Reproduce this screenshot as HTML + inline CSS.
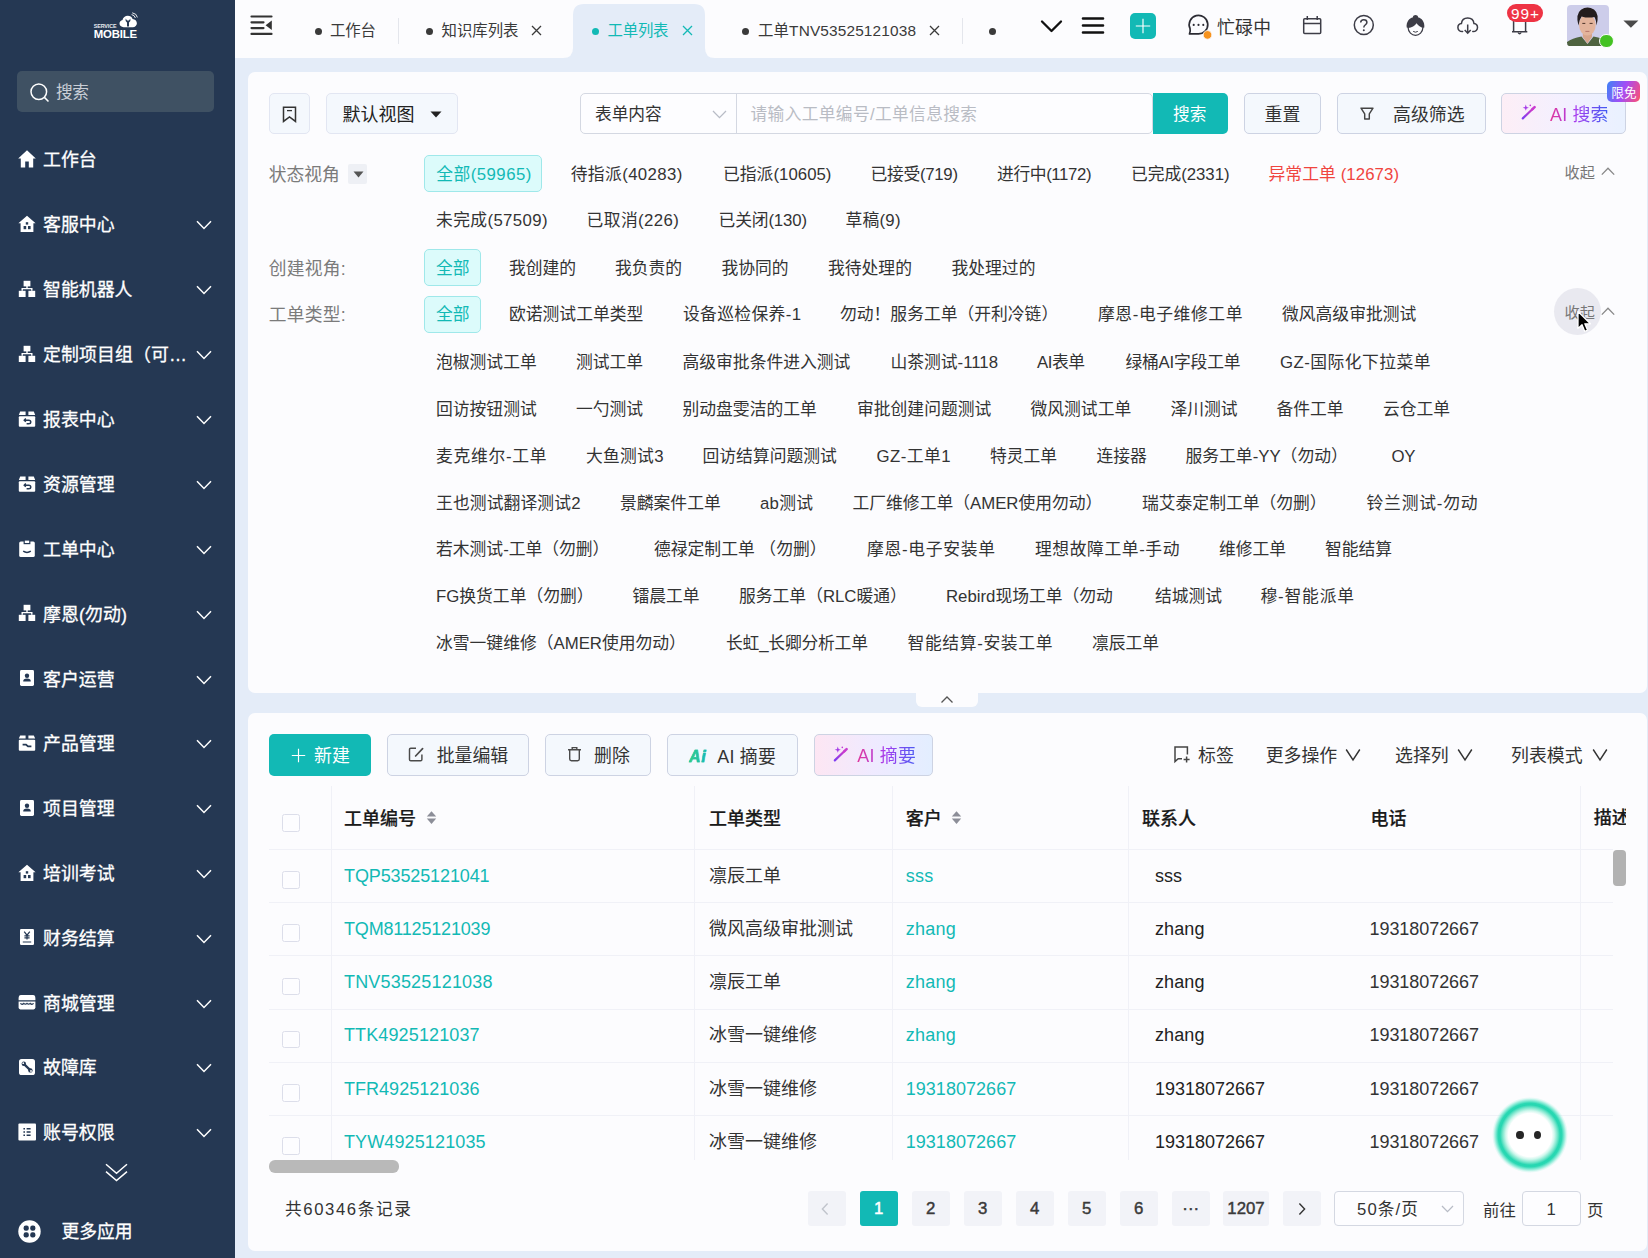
<!DOCTYPE html>
<html lang="zh-CN"><head><meta charset="utf-8"><title>工单列表</title>
<style>
html,body{margin:0;padding:0}
body{width:1648px;height:1258px;overflow:hidden;position:relative;background:#e4ecf8;font-family:"Liberation Sans","Noto Sans CJK SC",sans-serif}
.t{position:absolute;white-space:nowrap;line-height:24px;height:24px}
.b{position:absolute;box-sizing:border-box}
</style></head>
<body>
<div class="b" style="left:235.0px;top:0.0px;width:1413.0px;height:58.0px;background:#fcfcfe"></div>
<svg class="b" style="left:563px;top:3px" width="152" height="55" viewBox="0 0 152 55"><path d="M0 55 Q10 55 10 45 L10 12 Q10 1 21 1 L131 1 Q142 1 142 12 L142 45 Q142 55 152 55 Z" fill="#e4ecf8"/></svg>
<svg class="b" style="left:250.0px;top:14.0px;" width="23" height="22" viewBox="0 0 23 22"><g stroke="#333" stroke-width="2.2" stroke-linecap="round"><path d="M1.5 2.5H21.5M1.5 8.3H13.5M1.5 14.1H13.5M1.5 19.9H21.5"/></g><path d="M21.8 6.5V16L15.6 11.2Z" fill="#333"/></svg>
<div class="b" style="left:314.5px;top:27.5px;width:7.0px;height:7.0px;border-radius:50%;background:#3a3a3a"></div>
<span class="t " style="left:330.0px;top:19.2px;font-size:15.4px;color:#3a3a3a;font-weight:400;letter-spacing:-0.09px;">工作台</span>
<div class="b" style="left:397.5px;top:18.0px;width:1.0px;height:26.0px;background:#e4e6ec"></div>
<div class="b" style="left:425.5px;top:27.5px;width:7.0px;height:7.0px;border-radius:50%;background:#3a3a3a"></div>
<span class="t " style="left:441.5px;top:19.2px;font-size:15.4px;color:#3a3a3a;font-weight:400;letter-spacing:0.01px;">知识库列表</span>
<svg class="b" style="left:531.0px;top:25.0px;" width="11" height="11" viewBox="0 0 11 11"><path d="M1 1L10 10M10 1L1 10" stroke="#3a3a3a" stroke-width="1.3" fill="none"/></svg>
<div class="b" style="left:591.5px;top:27.5px;width:7.0px;height:7.0px;border-radius:50%;background:#12b9b5"></div>
<span class="t " style="left:607.5px;top:19.2px;font-size:15.4px;color:#12b9b5;font-weight:400;letter-spacing:-0.19px;">工单列表</span>
<svg class="b" style="left:681.5px;top:25.0px;" width="11" height="11" viewBox="0 0 11 11"><path d="M1 1L10 10M10 1L1 10" stroke="#12b9b5" stroke-width="1.3" fill="none"/></svg>
<div class="b" style="left:742.0px;top:27.5px;width:7.0px;height:7.0px;border-radius:50%;background:#3a3a3a"></div>
<span class="t " style="left:758.0px;top:19.2px;font-size:15.4px;color:#3a3a3a;font-weight:400;letter-spacing:0.15px;">工单TNV53525121038</span>
<svg class="b" style="left:928.5px;top:25.0px;" width="11" height="11" viewBox="0 0 11 11"><path d="M1 1L10 10M10 1L1 10" stroke="#3a3a3a" stroke-width="1.3" fill="none"/></svg>
<div class="b" style="left:961.5px;top:18.0px;width:1.0px;height:26.0px;background:#e4e6ec"></div>
<div class="b" style="left:988.5px;top:27.5px;width:7.0px;height:7.0px;border-radius:50%;background:#3a3a3a"></div>
<svg class="b" style="left:1040.0px;top:19.0px;" width="23" height="15" viewBox="0 0 23 15"><path d="M2 2.5L11.5 12L21 2.5" stroke="#111" stroke-width="2.3" fill="none" stroke-linecap="round" stroke-linejoin="round"/></svg>
<svg class="b" style="left:1081.0px;top:16.0px;" width="24" height="19" viewBox="0 0 24 19"><path d="M2 2.5H22M2 9.5H22M2 16.5H22" stroke="#111" stroke-width="2.6" stroke-linecap="round"/></svg>
<div class="b" style="left:1130.0px;top:13.0px;width:26.0px;height:26.0px;background:#12b9b5;border-radius:5px"></div>
<svg class="b" style="left:1130.0px;top:13.0px;" width="26" height="26" viewBox="0 0 26 26"><path d="M13 5.8V20.2M5.8 13H20.2" stroke="#fff" stroke-width="1.15"/></svg>
<svg class="b" style="left:1186.0px;top:12.0px;" width="26" height="28" viewBox="0 0 26 28"><path d="M4 16.4A9.3 9.3 0 1 1 11.5 21.85L3.5 21.9Q4.7 19.2 4 16.4Z" fill="none" stroke="#2b2b33" stroke-width="1.7" stroke-linejoin="round"/><circle cx="7.7" cy="12.9" r="1.05" fill="#2b2b33"/><circle cx="12.5" cy="12.9" r="1.05" fill="#2b2b33"/><circle cx="17.3" cy="12.9" r="1.05" fill="#2b2b33"/><circle cx="21.5" cy="22.9" r="4.3" fill="#f7931e" stroke="#fcfcff" stroke-width="0.8"/></svg>
<span class="t " style="left:1217.0px;top:16.2px;font-size:17.8px;color:#333;font-weight:400;letter-spacing:0.32px;">忙碌中</span>
<svg class="b" style="left:1301.0px;top:14.0px;" width="22" height="22" viewBox="0 0 22 22"><rect x="2.7" y="4.8" width="17" height="14.6" rx="1" fill="none" stroke="#3d3d47" stroke-width="1.5"/><path d="M2.7 9.4H19.7M6.3 2V6M16.2 2V6" stroke="#3d3d47" stroke-width="1.5" fill="none"/></svg>
<svg class="b" style="left:1352.0px;top:14.0px;" width="24" height="24" viewBox="0 0 24 24"><circle cx="11.8" cy="11" r="9.5" fill="none" stroke="#3d3d47" stroke-width="1.5"/><path d="M8.7 8.6C8.7 6.8 10 5.8 11.8 5.8C13.6 5.8 14.9 6.9 14.9 8.5C14.9 10.7 11.8 10.8 11.8 13.4" fill="none" stroke="#3d3d47" stroke-width="1.5"/><circle cx="11.8" cy="16.2" r="1" fill="#3d3d47"/></svg>
<svg class="b" style="left:1403.0px;top:13.0px;" width="24" height="26" viewBox="0 0 24 26"><path d="M3.7 14.6C3 8.4 6.6 5 9.7 4.4C10.1 2.8 11.2 2 12.5 2C13.8 2 14.9 2.8 15.3 4.4C18.4 5 22 8.4 21.3 14.6L19.8 14.9C17 13.9 15 12.5 13.6 10.2C12 12.7 8.6 14.5 5.2 14.9Z" fill="#3d3d47"/><path d="M5.1 14.6C5.3 19 8.6 22.3 12.5 22.3C16.4 22.3 19.7 19 19.9 14.6" fill="none" stroke="#3d3d47" stroke-width="1.2"/><path d="M10.2 18.4Q12.5 20 14.8 18.4" stroke="#3d3d47" stroke-width="1" fill="none"/></svg>
<svg class="b" style="left:1455.0px;top:14.0px;" width="24" height="22" viewBox="0 0 24 22"><path d="M7.6 17.6C4.6 17.8 2.9 15.8 2.9 13.6C2.9 11.4 4.4 9.8 6.4 9.6C6.8 6.2 9.4 4 12.7 4C16 4 18.6 6.2 19 9.6C21 9.8 22.5 11.4 22.5 13.6C22.5 15.8 20.8 17.8 17.8 17.6" fill="none" stroke="#3d3d47" stroke-width="1.5" stroke-linecap="round"/><path d="M12.7 10.4V19M9.7 16L12.7 19.2L15.7 16" fill="none" stroke="#3d3d47" stroke-width="1.5"/></svg>
<svg class="b" style="left:1508.0px;top:16.0px;" width="24" height="22" viewBox="0 0 24 22"><path d="M5.6 15.6V5M17.6 15.6V5M4 15.7H19.3" fill="none" stroke="#3d3d47" stroke-width="1.5"/><path d="M10 16.5Q11.6 19 13.2 16.5" stroke="#3d3d47" stroke-width="1.3" fill="none"/></svg>
<div class="b" style="left:1507.0px;top:3.5px;width:36.0px;height:18.2px;background:#ee3344;border-radius:9.1px"></div>
<span class="t " style="left:1511.0px;top:2.2px;font-size:15.4px;color:#fff;font-weight:400;letter-spacing:0.95px;">99+</span>
<svg class="b" style="left:1567.4px;top:4.8px" width="42" height="41.4" viewBox="0 0 42 41.4"><defs><clipPath id="av"><rect width="42" height="41.4" rx="4"/></clipPath></defs><g clip-path="url(#av)"><rect width="42" height="41.4" fill="#cdcdea"/><path d="M0 41.4V37Q5 33.5 14.5 31.5L20.5 39L26.5 31.5Q36 33.5 42 37V41.4Z" fill="#4f6340"/><path d="M15.8 26H25V32L20.4 38.6L15.8 32Z" fill="#d7a58c"/><ellipse cx="20.4" cy="20" rx="8.3" ry="10.6" fill="#e3b49c"/><path d="M11.4 20.5Q8.4 9 14 4.8Q20 0.6 27 4.4Q32.6 8.6 29.6 20.5Q29 14.5 27.4 12Q21 13.4 14.6 11.4Q12.2 14.5 11.4 20.5Z" fill="#241d1e"/><path d="M15.3 18.4H18.3M22.6 18.4H25.6" stroke="#4a3228" stroke-width="1"/><path d="M18.4 26.4H22.4" stroke="#b5746a" stroke-width="1"/></g></svg>
<div class="b" style="left:1599.3px;top:34.0px;width:14.4px;height:14.4px;background:#44c222;border-radius:50%;border:1px solid #fcfcff"></div>
<svg class="b" style="left:1623.3px;top:20.2px;" width="16" height="9" viewBox="0 0 16 9"><path d="M0.4 0.4H15.4L7.9 7.8Z" fill="#4a4a4a"/></svg>
<div class="b" style="left:0.0px;top:0.0px;width:235.0px;height:1258.0px;background:#253853"></div>
<span class="t " style="left:93.7px;top:13.5px;font-size:5.4px;color:#e8ebf0;font-weight:700;letter-spacing:-0.10px;">SERVICE</span>
<span class="t " style="left:93.7px;top:22.0px;font-size:11.4px;color:#fff;font-weight:700;letter-spacing:-0.20px;">MOBILE</span>
<svg class="b" style="left:118.0px;top:12.0px;" width="22" height="16" viewBox="0 0 22 16"><path d="M5.6 15.2C3.2 15.2 1.5 13.6 1.5 11.6C1.5 9.8 2.8 8.4 4.5 8.1C5 5.4 7.2 3.8 9.8 3.8C12 3.8 13.8 5 14.6 6.9C17 7.1 18.9 8.8 18.9 11.2C18.9 13.5 17.1 15.2 14.8 15.2Z" fill="#fff"/><path d="M7.6 6.6Q7 9.6 9 10.6V14.6H11V10.6Q13 9.6 12.4 6.6L10.9 8.6H9.1Z" fill="#253853"/><path d="M13.6 2.6Q16.6 3 17.4 6M14.2 0.8Q18.6 1.4 19.4 5.4" stroke="#fff" stroke-width="0.9" fill="none"/></svg>
<div class="b" style="left:17.0px;top:71.0px;width:197.0px;height:41.0px;background:#3f5163;border-radius:5px"></div>
<svg class="b" style="left:29.0px;top:82.0px;" width="22" height="22" viewBox="0 0 22 22"><circle cx="9.8" cy="9.8" r="7.8" fill="none" stroke="#fff" stroke-width="1.5"/><path d="M15.4 15.4L19.5 19.5" stroke="#fff" stroke-width="1.5"/></svg>
<span class="t " style="left:56.0px;top:81.2px;font-size:16.7px;color:#c9ced6;font-weight:400;letter-spacing:-0.38px;">搜索</span>
<svg class="b" style="left:18.0px;top:149.5px;" width="18" height="18" viewBox="0 0 18 18"><path d="M9 0.2L0.2 8.6H2.8V17.6H7.2V11.6H10.8V17.6H15.2V8.6H17.8Z" fill="#fff"/></svg>
<span class="t " style="left:43.0px;top:148.2px;font-size:17.9px;color:#fff;font-weight:400;-webkit-text-stroke:0.3px #fff;">工作台</span>
<svg class="b" style="left:18.0px;top:214.5px;" width="18" height="18" viewBox="0 0 18 18"><path d="M9 0.8L0.4 8.2H2.6V17H15.4V8.2H17.6Z" fill="#fff"/><rect x="5.6" y="11" width="2.6" height="3.2" fill="#253853"/><rect x="10" y="11" width="2.6" height="3.2" fill="#253853"/><rect x="7.8" y="7.2" width="2.4" height="2.4" fill="#253853"/></svg>
<span class="t " style="left:43.0px;top:213.2px;font-size:17.9px;color:#fff;font-weight:400;-webkit-text-stroke:0.3px #fff;">客服中心</span>
<svg class="b" style="left:196.0px;top:220.0px;" width="16" height="10" viewBox="0 0 16 10"><path d="M1 1.2L8 8.4L15 1.2" stroke="#fff" stroke-width="1.5" fill="none"/></svg>
<svg class="b" style="left:18.0px;top:279.5px;" width="18" height="18" viewBox="0 0 18 18"><rect x="5.6" y="0.8" width="6.8" height="5.6" fill="#fff"/><rect x="0.8" y="10.8" width="6.8" height="6.2" fill="#fff"/><rect x="10.4" y="10.8" width="6.8" height="6.2" fill="#fff"/><path d="M9 6V8.6M4.2 10.8V8.6H13.8V10.8" stroke="#fff" stroke-width="1.4" fill="none"/></svg>
<span class="t " style="left:43.0px;top:278.2px;font-size:17.9px;color:#fff;font-weight:400;-webkit-text-stroke:0.3px #fff;">智能机器人</span>
<svg class="b" style="left:196.0px;top:285.0px;" width="16" height="10" viewBox="0 0 16 10"><path d="M1 1.2L8 8.4L15 1.2" stroke="#fff" stroke-width="1.5" fill="none"/></svg>
<svg class="b" style="left:18.0px;top:344.5px;" width="18" height="18" viewBox="0 0 18 18"><rect x="5.6" y="0.8" width="6.8" height="5.6" fill="#fff"/><rect x="0.8" y="10.8" width="6.8" height="6.2" fill="#fff"/><rect x="10.4" y="10.8" width="6.8" height="6.2" fill="#fff"/><path d="M9 6V8.6M4.2 10.8V8.6H13.8V10.8" stroke="#fff" stroke-width="1.4" fill="none"/></svg>
<span class="t " style="left:43.0px;top:343.2px;font-size:17.9px;color:#fff;font-weight:400;letter-spacing:0.12px;-webkit-text-stroke:0.3px #fff;">定制项目组（可…</span>
<svg class="b" style="left:196.0px;top:350.0px;" width="16" height="10" viewBox="0 0 16 10"><path d="M1 1.2L8 8.4L15 1.2" stroke="#fff" stroke-width="1.5" fill="none"/></svg>
<svg class="b" style="left:18.0px;top:409.5px;" width="18" height="18" viewBox="0 0 18 18"><path d="M2.2 1.6H7.6V5H0.8ZM10.4 1.6H15.8L17.2 5H10.4Z" fill="#fff"/><rect x="0.8" y="6.2" width="16.4" height="10.6" rx="1" fill="#fff"/><path d="M6.4 10.2H10.8Q12.8 10.2 12.8 12Q12.8 13.8 10.8 13.8H8.6M7.8 8.6L6.2 10.2L7.8 11.8" stroke="#253853" stroke-width="1.4" fill="none"/></svg>
<span class="t " style="left:43.0px;top:408.2px;font-size:17.9px;color:#fff;font-weight:400;-webkit-text-stroke:0.3px #fff;">报表中心</span>
<svg class="b" style="left:196.0px;top:415.0px;" width="16" height="10" viewBox="0 0 16 10"><path d="M1 1.2L8 8.4L15 1.2" stroke="#fff" stroke-width="1.5" fill="none"/></svg>
<svg class="b" style="left:18.0px;top:474.5px;" width="18" height="18" viewBox="0 0 18 18"><path d="M2.2 1.6H7.6V5H0.8ZM10.4 1.6H15.8L17.2 5H10.4Z" fill="#fff"/><rect x="0.8" y="6.2" width="16.4" height="10.6" rx="1" fill="#fff"/><path d="M6.4 10.2H10.8Q12.8 10.2 12.8 12Q12.8 13.8 10.8 13.8H8.6M7.8 8.6L6.2 10.2L7.8 11.8" stroke="#253853" stroke-width="1.4" fill="none"/></svg>
<span class="t " style="left:43.0px;top:473.2px;font-size:17.9px;color:#fff;font-weight:400;-webkit-text-stroke:0.3px #fff;">资源管理</span>
<svg class="b" style="left:196.0px;top:480.0px;" width="16" height="10" viewBox="0 0 16 10"><path d="M1 1.2L8 8.4L15 1.2" stroke="#fff" stroke-width="1.5" fill="none"/></svg>
<svg class="b" style="left:18.0px;top:539.5px;" width="18" height="18" viewBox="0 0 18 18"><rect x="1.2" y="1.4" width="15.6" height="15.6" rx="1.6" fill="#fff"/><rect x="5.6" y="0.6" width="6.8" height="3.6" fill="#253853"/><rect x="6.8" y="0.6" width="4.4" height="2.4" fill="#fff"/><path d="M5.2 11.2Q9 13.6 12.8 11.2" stroke="#253853" stroke-width="1.5" fill="none"/></svg>
<span class="t " style="left:43.0px;top:538.2px;font-size:17.9px;color:#fff;font-weight:400;-webkit-text-stroke:0.3px #fff;">工单中心</span>
<svg class="b" style="left:196.0px;top:545.0px;" width="16" height="10" viewBox="0 0 16 10"><path d="M1 1.2L8 8.4L15 1.2" stroke="#fff" stroke-width="1.5" fill="none"/></svg>
<svg class="b" style="left:18.0px;top:604.0px;" width="18" height="18" viewBox="0 0 18 18"><rect x="5.6" y="0.8" width="6.8" height="5.6" fill="#fff"/><rect x="0.8" y="10.8" width="6.8" height="6.2" fill="#fff"/><rect x="10.4" y="10.8" width="6.8" height="6.2" fill="#fff"/><path d="M9 6V8.6M4.2 10.8V8.6H13.8V10.8" stroke="#fff" stroke-width="1.4" fill="none"/></svg>
<span class="t " style="left:43.0px;top:602.7px;font-size:17.9px;color:#fff;font-weight:400;letter-spacing:0.10px;-webkit-text-stroke:0.3px #fff;">摩恩(勿动)</span>
<svg class="b" style="left:196.0px;top:609.5px;" width="16" height="10" viewBox="0 0 16 10"><path d="M1 1.2L8 8.4L15 1.2" stroke="#fff" stroke-width="1.5" fill="none"/></svg>
<svg class="b" style="left:18.0px;top:669.0px;" width="18" height="18" viewBox="0 0 18 18"><rect x="2" y="1" width="14" height="16" rx="1.4" fill="#fff"/><circle cx="9" cy="6.8" r="2.2" fill="#253853"/><path d="M5.2 12.4Q5.2 9.6 9 9.6Q12.8 9.6 12.8 12.4Z" fill="#253853"/></svg>
<span class="t " style="left:43.0px;top:667.7px;font-size:17.9px;color:#fff;font-weight:400;-webkit-text-stroke:0.3px #fff;">客户运营</span>
<svg class="b" style="left:196.0px;top:674.5px;" width="16" height="10" viewBox="0 0 16 10"><path d="M1 1.2L8 8.4L15 1.2" stroke="#fff" stroke-width="1.5" fill="none"/></svg>
<svg class="b" style="left:18.0px;top:733.5px;" width="18" height="18" viewBox="0 0 18 18"><path d="M2.2 1.6H7.6V4.6H0.8ZM10.4 1.6H15.8L17.2 4.6H10.4Z" fill="#fff"/><rect x="0.8" y="5.8" width="16.4" height="11" rx="1" fill="#fff"/><path d="M4.6 10.6H8L10 12.4H13.4" stroke="#253853" stroke-width="1.8" fill="none"/></svg>
<span class="t " style="left:43.0px;top:732.2px;font-size:17.9px;color:#fff;font-weight:400;-webkit-text-stroke:0.3px #fff;">产品管理</span>
<svg class="b" style="left:196.0px;top:739.0px;" width="16" height="10" viewBox="0 0 16 10"><path d="M1 1.2L8 8.4L15 1.2" stroke="#fff" stroke-width="1.5" fill="none"/></svg>
<svg class="b" style="left:18.0px;top:798.5px;" width="18" height="18" viewBox="0 0 18 18"><rect x="2" y="1" width="14" height="16" rx="1.4" fill="#fff"/><circle cx="9" cy="6.8" r="2.2" fill="#253853"/><path d="M5.2 12.4Q5.2 9.6 9 9.6Q12.8 9.6 12.8 12.4Z" fill="#253853"/></svg>
<span class="t " style="left:43.0px;top:797.2px;font-size:17.9px;color:#fff;font-weight:400;-webkit-text-stroke:0.3px #fff;">项目管理</span>
<svg class="b" style="left:196.0px;top:804.0px;" width="16" height="10" viewBox="0 0 16 10"><path d="M1 1.2L8 8.4L15 1.2" stroke="#fff" stroke-width="1.5" fill="none"/></svg>
<svg class="b" style="left:18.0px;top:863.5px;" width="18" height="18" viewBox="0 0 18 18"><path d="M9 0.8L0.4 8.2H2.6V17H15.4V8.2H17.6Z" fill="#fff"/><rect x="5.6" y="11" width="2.6" height="3.2" fill="#253853"/><rect x="10" y="11" width="2.6" height="3.2" fill="#253853"/><rect x="7.8" y="7.2" width="2.4" height="2.4" fill="#253853"/></svg>
<span class="t " style="left:43.0px;top:862.2px;font-size:17.9px;color:#fff;font-weight:400;-webkit-text-stroke:0.3px #fff;">培训考试</span>
<svg class="b" style="left:196.0px;top:869.0px;" width="16" height="10" viewBox="0 0 16 10"><path d="M1 1.2L8 8.4L15 1.2" stroke="#fff" stroke-width="1.5" fill="none"/></svg>
<svg class="b" style="left:18.0px;top:928.0px;" width="18" height="18" viewBox="0 0 18 18"><rect x="2" y="1" width="14" height="16" rx="1.2" fill="#fff"/><path d="M6.2 3.6L9 7.2L11.8 3.6M9 7.2V11.6M6.4 7.8H11.6M6.4 9.8H11.6M4.8 14H13.2" stroke="#253853" stroke-width="1.2" fill="none"/></svg>
<span class="t " style="left:43.0px;top:926.7px;font-size:17.9px;color:#fff;font-weight:400;-webkit-text-stroke:0.3px #fff;">财务结算</span>
<svg class="b" style="left:196.0px;top:933.5px;" width="16" height="10" viewBox="0 0 16 10"><path d="M1 1.2L8 8.4L15 1.2" stroke="#fff" stroke-width="1.5" fill="none"/></svg>
<svg class="b" style="left:18.0px;top:993.0px;" width="18" height="18" viewBox="0 0 18 18"><path d="M3 2H15Q17.4 2 17.4 5.4V7.2H0.6V5.4Q0.6 2 3 2Z" fill="#fff"/><path d="M0.6 8.6H17.4V14.6Q17.4 16.4 15.6 16.4H2.4Q0.6 16.4 0.6 14.6Z" fill="#fff"/><path d="M2.4 10.4Q4 12 5.8 10.4Q7.4 12 9 10.4Q10.6 12 12.2 10.4Q14 12 15.6 10.4" stroke="#253853" stroke-width="1.3" fill="none"/></svg>
<span class="t " style="left:43.0px;top:991.7px;font-size:17.9px;color:#fff;font-weight:400;-webkit-text-stroke:0.3px #fff;">商城管理</span>
<svg class="b" style="left:196.0px;top:998.5px;" width="16" height="10" viewBox="0 0 16 10"><path d="M1 1.2L8 8.4L15 1.2" stroke="#fff" stroke-width="1.5" fill="none"/></svg>
<svg class="b" style="left:18.0px;top:1057.5px;" width="18" height="18" viewBox="0 0 18 18"><rect x="1" y="1" width="16" height="16" rx="2.6" fill="#fff"/><path d="M5.6 5.6L12.4 12.4" stroke="#253853" stroke-width="2.2"/><circle cx="5.8" cy="5.8" r="2.2" fill="#253853"/><circle cx="12.4" cy="12.4" r="2.2" fill="#253853"/><circle cx="5.2" cy="5.2" r="0.9" fill="#fff"/><circle cx="13" cy="13" r="0.9" fill="#fff"/></svg>
<span class="t " style="left:43.0px;top:1056.2px;font-size:17.9px;color:#fff;font-weight:400;-webkit-text-stroke:0.3px #fff;">故障库</span>
<svg class="b" style="left:196.0px;top:1063.0px;" width="16" height="10" viewBox="0 0 16 10"><path d="M1 1.2L8 8.4L15 1.2" stroke="#fff" stroke-width="1.5" fill="none"/></svg>
<svg class="b" style="left:18.0px;top:1122.5px;" width="18" height="18" viewBox="0 0 18 18"><rect x="0.4" y="0.6" width="17.6" height="17" rx="1" fill="#fff"/><path d="M5.4 5.8H7M8.6 5.8H12.6M5.4 9H7M8.6 9H12.6M5.4 12.2H7M8.6 12.2H12.6" stroke="#253853" stroke-width="1.4"/></svg>
<span class="t " style="left:43.0px;top:1121.2px;font-size:17.9px;color:#fff;font-weight:400;-webkit-text-stroke:0.3px #fff;">账号权限</span>
<svg class="b" style="left:196.0px;top:1128.0px;" width="16" height="10" viewBox="0 0 16 10"><path d="M1 1.2L8 8.4L15 1.2" stroke="#fff" stroke-width="1.5" fill="none"/></svg>
<svg class="b" style="left:105.0px;top:1163.0px;" width="23" height="19" viewBox="0 0 23 19"><path d="M1 1.2L11.5 10.2L22 1.2M1 8.6L11.5 17.6L22 8.6" stroke="#fff" stroke-width="1.5" fill="none"/></svg>
<svg class="b" style="left:17.5px;top:1219.5px;" width="23" height="23" viewBox="0 0 23 23"><circle cx="11.5" cy="11.5" r="11.2" fill="#fff"/><g fill="#253853"><rect x="5.6" y="5.6" width="5.2" height="5.2" rx="2.2"/><rect x="12.2" y="5.6" width="5.2" height="5.2" rx="2.2"/><rect x="5.6" y="12.2" width="5.2" height="5.2" rx="2.2"/><rect x="12.2" y="12.2" width="5.2" height="5.2" rx="2.2"/></g></svg>
<span class="t " style="left:61.5px;top:1220.2px;font-size:17.8px;color:#fff;font-weight:400;-webkit-text-stroke:0.3px #fff;">更多应用</span>
<div class="b" style="left:248.0px;top:72.0px;width:1398.5px;height:620.5px;background:#fcfcfe;border-radius:7px"></div>
<div class="b" style="left:269.0px;top:93.0px;width:40.5px;height:41.0px;background:#f4f8fd;border:1px solid #cdd3e3;border-radius:5px;border-color:#e2e6f2;"></div>
<svg class="b" style="left:282.0px;top:105.5px;" width="15" height="17" viewBox="0 0 15 17"><path d="M1.5 1.2H13.5V15.4L7.5 11L1.5 15.4Z" fill="none" stroke="#333" stroke-width="1.5"/><path d="M5 4.6H10" stroke="#333" stroke-width="1.3"/></svg>
<div class="b" style="left:326.0px;top:93.0px;width:132.0px;height:41.0px;background:#f4f8fd;border:1px solid #cdd3e3;border-radius:5px;border-color:#e2e6f2;"></div>
<span class="t " style="left:342.5px;top:102.7px;font-size:18px;color:#222;font-weight:400;">默认视图</span>
<svg class="b" style="left:430.0px;top:110.5px;" width="12" height="7" viewBox="0 0 12 7"><path d="M0.5 0.5H11.5L6 6.5Z" fill="#222"/></svg>
<div class="b" style="left:580.0px;top:93.0px;width:573.0px;height:41.0px;background:#fdfdff;border:1px solid #d4d8e2;border-radius:5px"></div>
<div class="b" style="left:736.0px;top:93.0px;width:1.0px;height:41.0px;background:#d4d8e2"></div>
<span class="t " style="left:595.0px;top:103.2px;font-size:16.7px;color:#333;font-weight:400;">表单内容</span>
<svg class="b" style="left:712.0px;top:109.5px;" width="15" height="9" viewBox="0 0 15 9"><path d="M1 1L7.5 7.6L14 1" stroke="#b8bcc6" stroke-width="1.3" fill="none"/></svg>
<span class="t " style="left:750.5px;top:103.2px;font-size:16.7px;color:#b9bcc4;font-weight:400;letter-spacing:0.38px;">请输入工单编号/工单信息搜索</span>
<div class="b" style="left:1152.5px;top:93.0px;width:75.0px;height:41.0px;background:#12b9b5;border-radius:0 5px 5px 0"></div>
<span class="t " style="left:1173.0px;top:103.2px;font-size:16.7px;color:#fff;font-weight:400;">搜索</span>
<div class="b" style="left:1244.0px;top:93.0px;width:77.0px;height:41.0px;background:#f4f8fd;border:1px solid #cdd3e3;border-radius:5px;"></div>
<span class="t " style="left:1264.5px;top:103.2px;font-size:17.9px;color:#333;font-weight:400;">重置</span>
<div class="b" style="left:1337.0px;top:93.0px;width:148.6px;height:41.0px;background:#f4f8fd;border:1px solid #cdd3e3;border-radius:5px;"></div>
<svg class="b" style="left:1359.0px;top:106.0px;" width="16" height="16" viewBox="0 0 16 16"><path d="M2 2.2H14L10.3 7.8V13H5.7V7.8Z" fill="none" stroke="#444" stroke-width="1.45" stroke-linejoin="round"/></svg>
<span class="t " style="left:1393.0px;top:103.2px;font-size:17.9px;color:#333;font-weight:400;">高级筛选</span>
<div class="b" style="left:1501.0px;top:93.0px;width:124.5px;height:41.0px;background:linear-gradient(90deg,#fdeef6,#f3f0ff 50%,#e9f1ff);border:1px solid #cdd3e3;border-radius:5px"></div>
<svg class="b" style="left:1520.6px;top:104.0px;" width="16" height="16" viewBox="0 0 16 16"><defs><linearGradient id="wg1" x1="0" y1="1" x2="1" y2="0"><stop offset="0" stop-color="#7d3cf2"/><stop offset="1" stop-color="#d23bc6"/></linearGradient></defs><path d="M1.8 14.4L11.6 5" stroke="url(#wg1)" stroke-width="2.2" stroke-linecap="round"/><path d="M11.2 5.4L13.6 3.1" stroke="#c93cd0" stroke-width="2.6" stroke-linecap="round"/><path d="M4.8 0.6L5.6 2.9L7.9 3.7L5.6 4.5L4.8 6.8L4 4.5L1.7 3.7L4 2.9Z" fill="#a63ce8"/><circle cx="9.3" cy="1.4" r="0.8" fill="#c03cd8"/></svg>
<span class="t " style="left:1550.0px;top:103.2px;font-size:17.9px;color:#7a3cf0;font-weight:400;letter-spacing:0.21px;background:linear-gradient(90deg,#e0389c,#a43cf0 45%,#3a5cf2);-webkit-background-clip:text;background-clip:text;color:transparent;-webkit-text-fill-color:transparent;">AI 搜索</span>
<div class="b" style="left:1606.5px;top:81.0px;width:33.5px;height:20.7px;background:linear-gradient(110deg,#3d83f7,#a44df5 50%,#ee4f8b 90%,#f4604a);border-radius:5px"></div>
<span class="t " style="left:1611.3px;top:80.5px;font-size:12.6px;color:#fff;font-weight:400;">限免</span>
<span class="t " style="left:268.7px;top:162.5px;font-size:17.8px;color:#7b7b7b;font-weight:400;">状态视角</span>
<div class="b" style="left:348.0px;top:164.0px;width:19.0px;height:19.5px;background:#eef0f5;border-radius:2px"></div>
<svg class="b" style="left:352.5px;top:170.5px;" width="11" height="7" viewBox="0 0 11 7"><path d="M0.5 0.5H10.5L5.5 6.5Z" fill="#555"/></svg>
<span class="t " style="left:268.7px;top:256.7px;font-size:17.8px;color:#7b7b7b;font-weight:400;letter-spacing:0.23px;">创建视角:</span>
<span class="t " style="left:268.7px;top:303.4px;font-size:17.8px;color:#7b7b7b;font-weight:400;letter-spacing:0.23px;">工单类型:</span>
<div class="b" style="left:424.0px;top:155.0px;width:118.3px;height:36.7px;background:#dcfbfb;border:1px solid #9fe8ea;border-radius:5px"></div>
<div class="b" style="left:424.0px;top:249.2px;width:56.8px;height:36.7px;background:#dcfbfb;border:1px solid #9fe8ea;border-radius:5px"></div>
<div class="b" style="left:424.0px;top:296.0px;width:56.8px;height:36.7px;background:#dcfbfb;border:1px solid #9fe8ea;border-radius:5px"></div>
<span class="t " style="left:436.3px;top:162.5px;font-size:16.8px;color:#12b9b5;font-weight:400;letter-spacing:0.45px;">全部(59965)</span>
<span class="t " style="left:570.7px;top:162.5px;font-size:16.8px;color:#333;font-weight:400;letter-spacing:0.38px;">待指派(40283)</span>
<span class="t " style="left:723.0px;top:162.5px;font-size:16.8px;color:#333;font-weight:400;letter-spacing:0.03px;">已指派(10605)</span>
<span class="t " style="left:870.5px;top:162.5px;font-size:16.8px;color:#333;font-weight:400;letter-spacing:-0.29px;">已接受(719)</span>
<span class="t " style="left:997.0px;top:162.5px;font-size:16.8px;color:#333;font-weight:400;letter-spacing:-0.39px;">进行中(1172)</span>
<span class="t " style="left:1131.0px;top:162.5px;font-size:16.8px;color:#333;font-weight:400;letter-spacing:-0.04px;">已完成(2331)</span>
<span class="t " style="left:1268.5px;top:162.5px;font-size:16.8px;color:#f0453f;font-weight:400;letter-spacing:0.08px;">异常工单 (12673)</span>
<span class="t " style="left:436.0px;top:209.2px;font-size:16.8px;color:#333;font-weight:400;letter-spacing:0.37px;">未完成(57509)</span>
<span class="t " style="left:586.5px;top:209.2px;font-size:16.8px;color:#333;font-weight:400;letter-spacing:0.42px;">已取消(226)</span>
<span class="t " style="left:718.5px;top:209.2px;font-size:16.8px;color:#333;font-weight:400;letter-spacing:-0.15px;">已关闭(130)</span>
<span class="t " style="left:845.5px;top:209.2px;font-size:16.8px;color:#333;font-weight:400;letter-spacing:0.23px;">草稿(9)</span>
<span class="t " style="left:436.0px;top:256.7px;font-size:16.8px;color:#12b9b5;font-weight:400;">全部</span>
<span class="t " style="left:509.0px;top:256.7px;font-size:16.8px;color:#333;font-weight:400;">我创建的</span>
<span class="t " style="left:615.0px;top:256.7px;font-size:16.8px;color:#333;font-weight:400;">我负责的</span>
<span class="t " style="left:721.5px;top:256.7px;font-size:16.8px;color:#333;font-weight:400;">我协同的</span>
<span class="t " style="left:828.0px;top:256.7px;font-size:16.8px;color:#333;font-weight:400;">我待处理的</span>
<span class="t " style="left:951.5px;top:256.7px;font-size:16.8px;color:#333;font-weight:400;">我处理过的</span>
<span class="t " style="left:436.0px;top:303.4px;font-size:16.8px;color:#12b9b5;font-weight:400;">全部</span>
<span class="t " style="left:509.0px;top:303.4px;font-size:16.8px;color:#333;font-weight:400;">欧诺测试工单类型</span>
<span class="t " style="left:683.0px;top:303.4px;font-size:16.8px;color:#333;font-weight:400;letter-spacing:0.34px;">设备巡检保养-1</span>
<span class="t " style="left:840.0px;top:303.4px;font-size:16.8px;color:#333;font-weight:400;">勿动！服务工单（开利冷链）</span>
<span class="t " style="left:1098.0px;top:303.4px;font-size:16.8px;color:#333;font-weight:400;letter-spacing:0.58px;">摩恩-电子维修工单</span>
<span class="t " style="left:1282.0px;top:303.4px;font-size:16.8px;color:#333;font-weight:400;">微风高级审批测试</span>
<span class="t " style="left:436.0px;top:350.5px;font-size:16.8px;color:#333;font-weight:400;">泡椒测试工单</span>
<span class="t " style="left:576.0px;top:350.5px;font-size:16.8px;color:#333;font-weight:400;">测试工单</span>
<span class="t " style="left:682.5px;top:350.5px;font-size:16.8px;color:#333;font-weight:400;">高级审批条件进入测试</span>
<span class="t " style="left:890.5px;top:350.5px;font-size:16.8px;color:#333;font-weight:400;letter-spacing:-0.01px;">山茶测试-1118</span>
<span class="t " style="left:1037.0px;top:350.5px;font-size:16.8px;color:#333;font-weight:400;letter-spacing:-0.47px;">AI表单</span>
<span class="t " style="left:1125.5px;top:350.5px;font-size:16.8px;color:#333;font-weight:400;letter-spacing:-0.22px;">绿桶AI字段工单</span>
<span class="t " style="left:1280.0px;top:350.5px;font-size:16.8px;color:#333;font-weight:400;letter-spacing:0.46px;">GZ-国际化下拉菜单</span>
<span class="t " style="left:436.0px;top:397.5px;font-size:16.8px;color:#333;font-weight:400;">回访按钮测试</span>
<span class="t " style="left:576.0px;top:397.5px;font-size:16.8px;color:#333;font-weight:400;">一勺测试</span>
<span class="t " style="left:682.5px;top:397.5px;font-size:16.8px;color:#333;font-weight:400;">别动盘雯洁的工单</span>
<span class="t " style="left:857.0px;top:397.5px;font-size:16.8px;color:#333;font-weight:400;">审批创建问题测试</span>
<span class="t " style="left:1030.5px;top:397.5px;font-size:16.8px;color:#333;font-weight:400;">微风测试工单</span>
<span class="t " style="left:1170.5px;top:397.5px;font-size:16.8px;color:#333;font-weight:400;">泽川测试</span>
<span class="t " style="left:1276.5px;top:397.5px;font-size:16.8px;color:#333;font-weight:400;">备件工单</span>
<span class="t " style="left:1383.0px;top:397.5px;font-size:16.8px;color:#333;font-weight:400;">云仓工单</span>
<span class="t " style="left:436.0px;top:444.5px;font-size:16.8px;color:#333;font-weight:400;letter-spacing:0.70px;">麦克维尔-工单</span>
<span class="t " style="left:586.0px;top:444.5px;font-size:16.8px;color:#333;font-weight:400;letter-spacing:0.26px;">大鱼测试3</span>
<span class="t " style="left:702.5px;top:444.5px;font-size:16.8px;color:#333;font-weight:400;">回访结算问题测试</span>
<span class="t " style="left:876.5px;top:444.5px;font-size:16.8px;color:#333;font-weight:400;letter-spacing:0.44px;">GZ-工单1</span>
<span class="t " style="left:990.0px;top:444.5px;font-size:16.8px;color:#333;font-weight:400;">特灵工单</span>
<span class="t " style="left:1096.5px;top:444.5px;font-size:16.8px;color:#333;font-weight:400;">连接器</span>
<span class="t " style="left:1185.5px;top:444.5px;font-size:16.8px;color:#333;font-weight:400;">服务工单-YY（勿动）</span>
<span class="t " style="left:1391.5px;top:444.5px;font-size:16.8px;color:#333;font-weight:400;letter-spacing:-0.25px;">OY</span>
<span class="t " style="left:436.0px;top:491.5px;font-size:16.8px;color:#333;font-weight:400;letter-spacing:0.11px;">王也测试翻译测试2</span>
<span class="t " style="left:620.0px;top:491.5px;font-size:16.8px;color:#333;font-weight:400;">景麟案件工单</span>
<span class="t " style="left:760.0px;top:491.5px;font-size:16.8px;color:#333;font-weight:400;letter-spacing:0.26px;">ab测试</span>
<span class="t " style="left:852.5px;top:491.5px;font-size:16.8px;color:#333;font-weight:400;">工厂维修工单（AMER使用勿动）</span>
<span class="t " style="left:1142.0px;top:491.5px;font-size:16.8px;color:#333;font-weight:400;">瑞艾泰定制工单（勿删）</span>
<span class="t " style="left:1366.5px;top:491.5px;font-size:16.8px;color:#333;font-weight:400;letter-spacing:0.79px;">铃兰测试-勿动</span>
<span class="t " style="left:436.0px;top:538.4px;font-size:16.8px;color:#333;font-weight:400;">若木测试-工单（勿删）</span>
<span class="t " style="left:654.0px;top:538.4px;font-size:16.8px;color:#333;font-weight:400;">德禄定制工单 （勿删）</span>
<span class="t " style="left:867.0px;top:538.4px;font-size:16.8px;color:#333;font-weight:400;letter-spacing:0.71px;">摩恩-电子安装单</span>
<span class="t " style="left:1035.0px;top:538.4px;font-size:16.8px;color:#333;font-weight:400;letter-spacing:0.58px;">理想故障工单-手动</span>
<span class="t " style="left:1219.0px;top:538.4px;font-size:16.8px;color:#333;font-weight:400;">维修工单</span>
<span class="t " style="left:1325.0px;top:538.4px;font-size:16.8px;color:#333;font-weight:400;">智能结算</span>
<span class="t " style="left:436.0px;top:585.4px;font-size:16.8px;color:#333;font-weight:400;">FG换货工单（勿删）</span>
<span class="t " style="left:632.5px;top:585.4px;font-size:16.8px;color:#333;font-weight:400;">镭晨工单</span>
<span class="t " style="left:739.0px;top:585.4px;font-size:16.8px;color:#333;font-weight:400;">服务工单（RLC暖通）</span>
<span class="t " style="left:946.0px;top:585.4px;font-size:16.8px;color:#333;font-weight:400;">Rebird现场工单（勿动</span>
<span class="t " style="left:1155.0px;top:585.4px;font-size:16.8px;color:#333;font-weight:400;">结城测试</span>
<span class="t " style="left:1260.5px;top:585.4px;font-size:16.8px;color:#333;font-weight:400;letter-spacing:0.80px;">穆-智能派单</span>
<span class="t " style="left:436.0px;top:632.4px;font-size:16.8px;color:#333;font-weight:400;">冰雪一键维修（AMER使用勿动）</span>
<span class="t " style="left:726.0px;top:632.4px;font-size:16.8px;color:#333;font-weight:400;letter-spacing:-0.20px;">长虹_长卿分析工单</span>
<span class="t " style="left:907.5px;top:632.4px;font-size:16.8px;color:#333;font-weight:400;letter-spacing:0.64px;">智能结算-安装工单</span>
<span class="t " style="left:1092.0px;top:632.4px;font-size:16.8px;color:#333;font-weight:400;">凛辰工单</span>
<span class="t " style="left:1564.5px;top:160.7px;font-size:15.2px;color:#777;font-weight:400;">收起</span>
<svg class="b" style="left:1601.0px;top:167.0px;" width="14" height="9" viewBox="0 0 14 9"><path d="M0.8 7.6L7 1.2L13.2 7.6" stroke="#888" stroke-width="1.3" fill="none"/></svg>
<div class="b" style="left:1554.3px;top:287.8px;width:47.0px;height:47.0px;background:#e9e9f0;border-radius:50%"></div>
<span class="t " style="left:1564.5px;top:301.2px;font-size:15.2px;color:#777;font-weight:400;">收起</span>
<svg class="b" style="left:1601.0px;top:307.2px;" width="14" height="9" viewBox="0 0 14 9"><path d="M0.8 7.6L7 1.2L13.2 7.6" stroke="#888" stroke-width="1.3" fill="none"/></svg>
<svg class="b" style="left:1575.5px;top:309.6px;" width="16" height="24" viewBox="0 0 16 24"><path d="M2 1.5V18.5L6 14.8L8.8 21.4L11.6 20.2L8.8 13.8H14.4Z" fill="#000" stroke="#fff" stroke-width="1.3" stroke-linejoin="round"/></svg>
<div class="b" style="left:916.0px;top:692.0px;width:62.0px;height:15.0px;background:#fcfcfe;border-radius:0 0 6px 6px"></div>
<svg class="b" style="left:940.0px;top:694.5px;" width="14" height="9" viewBox="0 0 14 9"><path d="M1.5 7.5L7 2L12.5 7.5" stroke="#555" stroke-width="1.3" fill="none"/></svg>
<div class="b" style="left:248.0px;top:713.3px;width:1398.5px;height:537.4px;background:#fcfcfe;border-radius:7px"></div>
<div class="b" style="left:268.5px;top:734.0px;width:102.5px;height:41.7px;background:#12b9b5;border-radius:5px"></div>
<svg class="b" style="left:291.0px;top:747.5px;" width="15" height="15" viewBox="0 0 15 15"><path d="M7.5 0.8V14.2M0.8 7.5H14.2" stroke="#fff" stroke-width="1.15"/></svg>
<span class="t " style="left:314.0px;top:744.2px;font-size:17.9px;color:#fff;font-weight:400;">新建</span>
<div class="b" style="left:386.7px;top:734.0px;width:142.0px;height:41.7px;background:#f4f8fd;border:1px solid #cdd3e3;border-radius:5px;"></div>
<svg class="b" style="left:408.3px;top:746.0px;" width="17" height="17" viewBox="0 0 17 17"><path d="M8 2.2H2.8Q1.5 2.2 1.5 3.5V13.4Q1.5 14.7 2.8 14.7H12.6Q13.9 14.7 13.9 13.4V8.4" fill="none" stroke="#4a4a4a" stroke-width="1.45"/><path d="M7.6 10L14.6 2.6" stroke="#4a4a4a" stroke-width="1.7" stroke-linecap="round"/></svg>
<span class="t " style="left:436.7px;top:744.2px;font-size:17.9px;color:#333;font-weight:400;">批量编辑</span>
<div class="b" style="left:544.7px;top:734.0px;width:106.0px;height:41.7px;background:#f4f8fd;border:1px solid #cdd3e3;border-radius:5px;"></div>
<svg class="b" style="left:567.4px;top:746.0px;" width="15" height="17" viewBox="0 0 15 17"><path d="M1 3.8H14M5.2 3.6V1.6H9.8V3.6" fill="none" stroke="#4a4a4a" stroke-width="1.4"/><path d="M2.7 4V13Q2.7 14.7 4.4 14.7H10.6Q12.3 14.7 12.3 13V4" fill="none" stroke="#4a4a4a" stroke-width="1.4"/></svg>
<span class="t " style="left:594.0px;top:744.2px;font-size:17.9px;color:#333;font-weight:400;">删除</span>
<div class="b" style="left:667.2px;top:734.0px;width:131.0px;height:41.7px;background:#f4f8fd;border:1px solid #cdd3e3;border-radius:5px;"></div>
<span class="t " style="left:689.3px;top:745.0px;font-size:15.6px;color:#1fc7a5;font-weight:700;letter-spacing:0.91px;font-style:italic;-webkit-text-stroke:0.5px #22c3a0;background:linear-gradient(90deg,#35d07f,#12b6c8);-webkit-background-clip:text;background-clip:text;-webkit-text-fill-color:transparent;">Ai</span>
<span class="t " style="left:717.3px;top:744.5px;font-size:17.9px;color:#333;font-weight:400;letter-spacing:0.21px;">AI 摘要</span>
<div class="b" style="left:814.0px;top:734.0px;width:118.5px;height:41.7px;background:linear-gradient(90deg,#fde6f3,#efeaff 50%,#e3eeff);border:1px solid #cdd3e3;border-radius:5px"></div>
<svg class="b" style="left:833.3px;top:746.2px;" width="16" height="16" viewBox="0 0 16 16"><defs><linearGradient id="wg2" x1="0" y1="1" x2="1" y2="0"><stop offset="0" stop-color="#7d3cf2"/><stop offset="1" stop-color="#d23bc6"/></linearGradient></defs><path d="M1.8 14.4L11.6 5" stroke="url(#wg2)" stroke-width="2.2" stroke-linecap="round"/><path d="M11.2 5.4L13.6 3.1" stroke="#c93cd0" stroke-width="2.6" stroke-linecap="round"/><path d="M4.8 0.6L5.6 2.9L7.9 3.7L5.6 4.5L4.8 6.8L4 4.5L1.7 3.7L4 2.9Z" fill="#a63ce8"/><circle cx="9.3" cy="1.4" r="0.8" fill="#c03cd8"/></svg>
<span class="t " style="left:857.3px;top:744.2px;font-size:17.9px;color:#7a3cf0;font-weight:400;letter-spacing:0.21px;background:linear-gradient(90deg,#e0389c,#a43cf0 50%,#4a5cf2);-webkit-background-clip:text;background-clip:text;color:transparent;-webkit-text-fill-color:transparent;">AI 摘要</span>
<svg class="b" style="left:1173.0px;top:745.0px;" width="18" height="19" viewBox="0 0 18 19"><path d="M14.4 9.6V2H2V16.6L5.2 13.8H9" fill="none" stroke="#444" stroke-width="1.5"/><path d="M10.6 14.4H16.6M13.6 11.4V17.4" stroke="#444" stroke-width="1.5"/></svg>
<span class="t " style="left:1198.0px;top:743.7px;font-size:17.9px;color:#333;font-weight:400;">标签</span>
<span class="t " style="left:1265.7px;top:743.7px;font-size:17.9px;color:#333;font-weight:400;">更多操作</span>
<svg class="b" style="left:1345.0px;top:748.0px;" width="16" height="14" viewBox="0 0 16 14"><path d="M1.2 1.5L8 12L14.8 1.5" stroke="#333" stroke-width="1.4" fill="none"/></svg>
<span class="t " style="left:1395.0px;top:743.7px;font-size:17.9px;color:#333;font-weight:400;">选择列</span>
<svg class="b" style="left:1457.0px;top:748.0px;" width="16" height="14" viewBox="0 0 16 14"><path d="M1.2 1.5L8 12L14.8 1.5" stroke="#333" stroke-width="1.4" fill="none"/></svg>
<span class="t " style="left:1511.0px;top:743.7px;font-size:17.9px;color:#333;font-weight:400;">列表模式</span>
<svg class="b" style="left:1591.5px;top:748.0px;" width="16" height="14" viewBox="0 0 16 14"><path d="M1.2 1.5L8 12L14.8 1.5" stroke="#333" stroke-width="1.4" fill="none"/></svg>
<div class="b" style="left:268px;top:786px;width:1358px;height:373.5px;overflow:hidden">
<div class="b" style="left:1.0px;top:63.0px;width:1344.0px;height:1.0px;background:#f0f1f7"></div>
<div class="b" style="left:1.0px;top:116.2px;width:1344.0px;height:1.0px;background:#f0f1f7"></div>
<div class="b" style="left:1.0px;top:169.4px;width:1344.0px;height:1.0px;background:#f0f1f7"></div>
<div class="b" style="left:1.0px;top:222.6px;width:1344.0px;height:1.0px;background:#f0f1f7"></div>
<div class="b" style="left:1.0px;top:275.8px;width:1344.0px;height:1.0px;background:#f0f1f7"></div>
<div class="b" style="left:1.0px;top:329.0px;width:1344.0px;height:1.0px;background:#f0f1f7"></div>
<div class="b" style="left:62.5px;top:0.0px;width:1.0px;height:374.0px;background:#f0f1f7"></div>
<div class="b" style="left:426.0px;top:0.0px;width:1.0px;height:374.0px;background:#f0f1f7"></div>
<div class="b" style="left:624.0px;top:0.0px;width:1.0px;height:374.0px;background:#f0f1f7"></div>
<div class="b" style="left:860.0px;top:0.0px;width:1.0px;height:374.0px;background:#f0f1f7"></div>
<div class="b" style="left:1312.0px;top:0.0px;width:1.0px;height:374.0px;background:#f0f1f7"></div>
</div>
<span class="t " style="left:344.0px;top:807.2px;font-size:18px;color:#1a1a1a;font-weight:500;-webkit-text-stroke:0.2px #1a1a1a;">工单编号</span>
<span class="t " style="left:709.0px;top:807.2px;font-size:18px;color:#1a1a1a;font-weight:500;-webkit-text-stroke:0.2px #1a1a1a;">工单类型</span>
<span class="t " style="left:905.7px;top:807.2px;font-size:18px;color:#1a1a1a;font-weight:500;-webkit-text-stroke:0.2px #1a1a1a;">客户</span>
<span class="t " style="left:1142.0px;top:807.2px;font-size:18px;color:#1a1a1a;font-weight:500;-webkit-text-stroke:0.2px #1a1a1a;">联系人</span>
<span class="t " style="left:1370.5px;top:807.2px;font-size:18px;color:#1a1a1a;font-weight:500;-webkit-text-stroke:0.2px #1a1a1a;">电话</span>
<div class="b" style="left:1590px;top:800px;width:36px;height:36px;overflow:hidden">
<span class="t" style="left:3.7px;top:6px;font-size:18px;color:#1a1a1a;font-weight:500;-webkit-text-stroke:0.2px #1a1a1a">描述</span>
</div>
<svg class="b" style="left:425.5px;top:810.6px;" width="11" height="14" viewBox="0 0 11 14"><path d="M5.5 0.3L10.2 5.6H0.8Z" fill="#8c8e98"/><path d="M5.5 12.9L10.2 7.6H0.8Z" fill="#8c8e98"/></svg>
<svg class="b" style="left:950.5px;top:810.6px;" width="11" height="14" viewBox="0 0 11 14"><path d="M5.5 0.3L10.2 5.6H0.8Z" fill="#8c8e98"/><path d="M5.5 12.9L10.2 7.6H0.8Z" fill="#8c8e98"/></svg>
<div class="b" style="left:282.0px;top:814.2px;width:17.6px;height:17.6px;background:#fdfdff;border:1px solid #dcdeea;border-radius:2.5px"></div>
<div class="b" style="left:282.0px;top:871.2px;width:17.6px;height:17.6px;background:#fdfdff;border:1px solid #dcdeea;border-radius:2.5px"></div>
<span class="t " style="left:344.0px;top:863.8px;font-size:18px;color:#12b9b5;font-weight:400;letter-spacing:-0.12px;">TQP53525121041</span>
<span class="t " style="left:709.0px;top:863.8px;font-size:18px;color:#333;font-weight:400;">凛辰工单</span>
<span class="t " style="left:905.7px;top:863.8px;font-size:18px;color:#12b9b5;font-weight:400;letter-spacing:0.25px;">sss</span>
<span class="t " style="left:1155.0px;top:863.8px;font-size:18px;color:#222;font-weight:400;letter-spacing:0.00px;">sss</span>
<div class="b" style="left:282.0px;top:924.4px;width:17.6px;height:17.6px;background:#fdfdff;border:1px solid #dcdeea;border-radius:2.5px"></div>
<span class="t " style="left:344.0px;top:917.0px;font-size:18px;color:#12b9b5;font-weight:400;letter-spacing:-0.18px;">TQM81125121039</span>
<span class="t " style="left:709.0px;top:917.0px;font-size:18px;color:#333;font-weight:400;">微风高级审批测试</span>
<span class="t " style="left:905.7px;top:917.0px;font-size:18px;color:#12b9b5;font-weight:400;letter-spacing:0.24px;">zhang</span>
<span class="t " style="left:1155.0px;top:917.0px;font-size:18px;color:#222;font-weight:400;letter-spacing:0.11px;">zhang</span>
<span class="t " style="left:1369.5px;top:917.0px;font-size:18px;color:#333;font-weight:400;letter-spacing:-0.06px;">19318072667</span>
<div class="b" style="left:282.0px;top:977.6px;width:17.6px;height:17.6px;background:#fdfdff;border:1px solid #dcdeea;border-radius:2.5px"></div>
<span class="t " style="left:344.0px;top:970.2px;font-size:18px;color:#12b9b5;font-weight:400;letter-spacing:0.18px;">TNV53525121038</span>
<span class="t " style="left:709.0px;top:970.2px;font-size:18px;color:#333;font-weight:400;">凛辰工单</span>
<span class="t " style="left:905.7px;top:970.2px;font-size:18px;color:#12b9b5;font-weight:400;letter-spacing:0.24px;">zhang</span>
<span class="t " style="left:1155.0px;top:970.2px;font-size:18px;color:#222;font-weight:400;letter-spacing:0.11px;">zhang</span>
<span class="t " style="left:1369.5px;top:970.2px;font-size:18px;color:#333;font-weight:400;letter-spacing:-0.06px;">19318072667</span>
<div class="b" style="left:282.0px;top:1030.8px;width:17.6px;height:17.6px;background:#fdfdff;border:1px solid #dcdeea;border-radius:2.5px"></div>
<span class="t " style="left:344.0px;top:1023.4px;font-size:18px;color:#12b9b5;font-weight:400;letter-spacing:0.12px;">TTK4925121037</span>
<span class="t " style="left:709.0px;top:1023.4px;font-size:18px;color:#333;font-weight:400;">冰雪一键维修</span>
<span class="t " style="left:905.7px;top:1023.4px;font-size:18px;color:#12b9b5;font-weight:400;letter-spacing:0.24px;">zhang</span>
<span class="t " style="left:1155.0px;top:1023.4px;font-size:18px;color:#222;font-weight:400;letter-spacing:0.11px;">zhang</span>
<span class="t " style="left:1369.5px;top:1023.4px;font-size:18px;color:#333;font-weight:400;letter-spacing:-0.06px;">19318072667</span>
<div class="b" style="left:282.0px;top:1084.0px;width:17.6px;height:17.6px;background:#fdfdff;border:1px solid #dcdeea;border-radius:2.5px"></div>
<span class="t " style="left:344.0px;top:1076.6px;font-size:18px;color:#12b9b5;font-weight:400;letter-spacing:0.03px;">TFR4925121036</span>
<span class="t " style="left:709.0px;top:1076.6px;font-size:18px;color:#333;font-weight:400;">冰雪一键维修</span>
<span class="t " style="left:905.7px;top:1076.6px;font-size:18px;color:#12b9b5;font-weight:400;letter-spacing:0.04px;">19318072667</span>
<span class="t " style="left:1155.0px;top:1076.6px;font-size:18px;color:#222;font-weight:400;letter-spacing:-0.01px;">19318072667</span>
<span class="t " style="left:1369.5px;top:1076.6px;font-size:18px;color:#333;font-weight:400;letter-spacing:-0.06px;">19318072667</span>
<div class="b" style="left:282.0px;top:1137.2px;width:17.6px;height:17.6px;background:#fdfdff;border:1px solid #dcdeea;border-radius:2.5px"></div>
<span class="t " style="left:344.0px;top:1129.8px;font-size:18px;color:#12b9b5;font-weight:400;letter-spacing:0.12px;">TYW4925121035</span>
<span class="t " style="left:709.0px;top:1129.8px;font-size:18px;color:#333;font-weight:400;">冰雪一键维修</span>
<span class="t " style="left:905.7px;top:1129.8px;font-size:18px;color:#12b9b5;font-weight:400;letter-spacing:0.04px;">19318072667</span>
<span class="t " style="left:1155.0px;top:1129.8px;font-size:18px;color:#222;font-weight:400;letter-spacing:-0.01px;">19318072667</span>
<span class="t " style="left:1369.5px;top:1129.8px;font-size:18px;color:#333;font-weight:400;letter-spacing:-0.06px;">19318072667</span>
<div class="b" style="left:1613.0px;top:849.5px;width:12.5px;height:36.5px;background:#b2b2b2;border-radius:4px"></div>
<div class="b" style="left:268.5px;top:1160.0px;width:130.5px;height:12.5px;background:#b9b9b9;border-radius:6px"></div>
<span class="t " style="left:285.0px;top:1198.0px;font-size:16.7px;color:#333;font-weight:400;letter-spacing:1.61px;">共60346条记录</span>
<div class="b" style="left:808.0px;top:1191.0px;width:37.5px;height:35.0px;background:#f2f3f8;border-radius:3px"></div>
<svg class="b" style="left:820.0px;top:1202.0px;" width="10" height="14" viewBox="0 0 10 14"><path d="M7.6 1.6L2.4 7L7.6 12.4" stroke="#c0c4cc" stroke-width="1.4" fill="none"/></svg>
<div class="b" style="left:859.5px;top:1191.0px;width:38.5px;height:35.0px;background:#12b9b5;border-radius:3px"></div>
<span class="t" style="left:859.5px;top:1196.5px;width:38.5px;text-align:center;font-size:16.8px;-webkit-text-stroke:0.45px #fff;color:#fff">1</span>
<div class="b" style="left:912.0px;top:1191.0px;width:37.5px;height:35.0px;background:#f2f3f8;border-radius:3px"></div>
<span class="t" style="left:912.0px;top:1196.5px;width:37.5px;text-align:center;font-size:16.8px;-webkit-text-stroke:0.45px #3a3a3a;color:#3a3a3a">2</span>
<div class="b" style="left:964.0px;top:1191.0px;width:37.5px;height:35.0px;background:#f2f3f8;border-radius:3px"></div>
<span class="t" style="left:964.0px;top:1196.5px;width:37.5px;text-align:center;font-size:16.8px;-webkit-text-stroke:0.45px #3a3a3a;color:#3a3a3a">3</span>
<div class="b" style="left:1016.0px;top:1191.0px;width:37.5px;height:35.0px;background:#f2f3f8;border-radius:3px"></div>
<span class="t" style="left:1016.0px;top:1196.5px;width:37.5px;text-align:center;font-size:16.8px;-webkit-text-stroke:0.45px #3a3a3a;color:#3a3a3a">4</span>
<div class="b" style="left:1068.0px;top:1191.0px;width:37.5px;height:35.0px;background:#f2f3f8;border-radius:3px"></div>
<span class="t" style="left:1068.0px;top:1196.5px;width:37.5px;text-align:center;font-size:16.8px;-webkit-text-stroke:0.45px #3a3a3a;color:#3a3a3a">5</span>
<div class="b" style="left:1120.0px;top:1191.0px;width:37.5px;height:35.0px;background:#f2f3f8;border-radius:3px"></div>
<span class="t" style="left:1120.0px;top:1196.5px;width:37.5px;text-align:center;font-size:16.8px;-webkit-text-stroke:0.45px #3a3a3a;color:#3a3a3a">6</span>
<div class="b" style="left:1172.0px;top:1191.0px;width:37.5px;height:35.0px;background:#f2f3f8;border-radius:3px"></div>
<span class="t" style="left:1172.0px;top:1196.5px;width:37.5px;text-align:center;font-size:16.8px;-webkit-text-stroke:0.45px #3a3a3a;color:#3a3a3a">···</span>
<div class="b" style="left:1223.0px;top:1191.0px;width:46.0px;height:35.0px;background:#f2f3f8;border-radius:3px"></div>
<span class="t" style="left:1223.0px;top:1196.5px;width:46.0px;text-align:center;font-size:16.8px;-webkit-text-stroke:0.45px #3a3a3a;color:#3a3a3a">1207</span>
<div class="b" style="left:1282.5px;top:1191.0px;width:38.0px;height:35.0px;background:#f2f3f8;border-radius:3px"></div>
<svg class="b" style="left:1297.0px;top:1202.0px;" width="10" height="14" viewBox="0 0 10 14"><path d="M2.4 1.6L7.6 7L2.4 12.4" stroke="#333" stroke-width="1.4" fill="none"/></svg>
<div class="b" style="left:1334.0px;top:1191.0px;width:129.5px;height:35.0px;background:#fdfdff;border:1px solid #d4d8e2;border-radius:4px"></div>
<span class="t " style="left:1357.0px;top:1197.7px;font-size:16.7px;color:#333;font-weight:400;letter-spacing:1.11px;">50条/页</span>
<svg class="b" style="left:1441.0px;top:1204.5px;" width="13" height="8" viewBox="0 0 13 8"><path d="M1 1L6.5 6.6L12 1" stroke="#b8bcc6" stroke-width="1.3" fill="none"/></svg>
<span class="t " style="left:1483.0px;top:1197.7px;font-size:16.4px;color:#333;font-weight:400;">前往</span>
<div class="b" style="left:1522.0px;top:1191.0px;width:59.0px;height:35.0px;background:#fdfdff;border:1px solid #d4d8e2;border-radius:4px"></div>
<span class="t " style="left:1546.5px;top:1197.7px;font-size:16.7px;color:#333;font-weight:400;">1</span>
<span class="t " style="left:1587.0px;top:1197.7px;font-size:16.4px;color:#333;font-weight:400;">页</span>
<div class="b" style="left:1492.0px;top:1096.7px;width:76.0px;height:76.0px;border-radius:50%;background:radial-gradient(circle closest-side,#fff 0,#fff 57%,#d0f7ed 64%,#7be7cd 72%,#26d6b1 79%,#2bd8b3 84%,rgba(90,228,198,0.75) 90%,rgba(150,238,218,0.3) 96%,rgba(170,242,224,0) 100%)"></div>
<div class="b" style="left:1516.2px;top:1130.6px;width:7.6px;height:8.8px;background:#262626;border-radius:50%"></div>
<div class="b" style="left:1533.6px;top:1130.6px;width:7.6px;height:8.8px;background:#262626;border-radius:50%"></div>
</body></html>
